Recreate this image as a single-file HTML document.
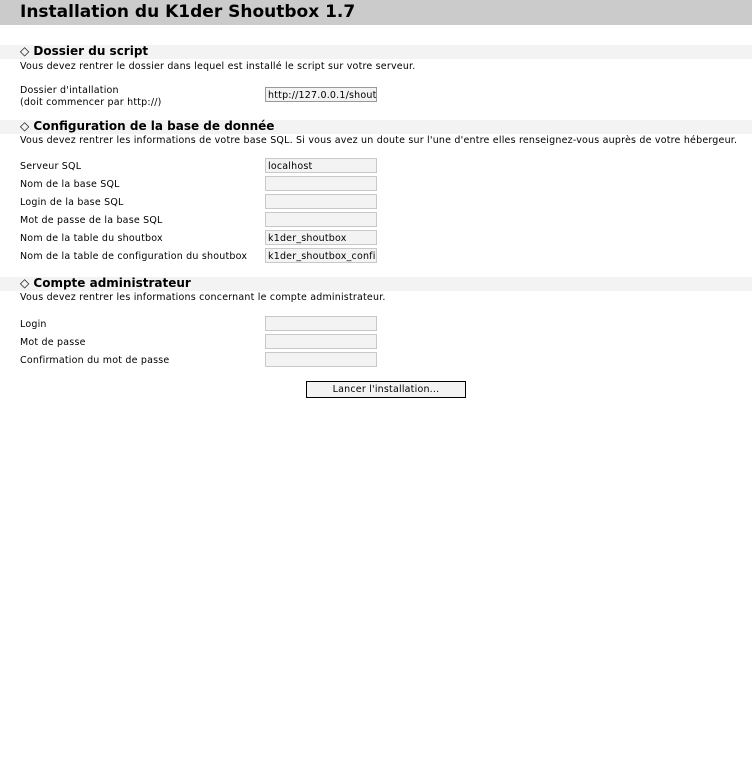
<!DOCTYPE html>
<html><head><meta charset="utf-8"><style>
body{margin:0;width:752px;height:761px;background:#fff;font-family:"DejaVu Sans","Liberation Sans",sans-serif;font-size:9.5px;letter-spacing:0.2px;color:#000;position:relative;overflow:hidden}
.a{position:absolute;white-space:nowrap}
.top{position:absolute;left:0;top:0;width:752px;height:25px;background:#cbcbcb}
.top span{position:absolute;left:20px;top:2px;font-size:17px;letter-spacing:0;font-weight:bold;font-family:"DejaVu Sans",sans-serif}
.sec{position:absolute;left:0;width:752px;height:14px;background:#f3f3f3}
.sec span{position:absolute;left:20px;top:-1px;font-size:12px;letter-spacing:0;font-weight:bold}
.in{position:absolute;left:265px;height:15px;border:1px solid #c8c8c8;background:#f3f3f3;font-size:9.5px;line-height:15px;padding-left:2px;box-sizing:border-box;width:112px;overflow:hidden;white-space:nowrap}
.btn{position:absolute;left:306px;top:381px;width:160px;height:17px;border:1px solid #000;background:#f3f3f3;box-sizing:border-box;text-align:center;line-height:15px}
</style></head><body>
<div class="top"><span>Installation du K1der Shoutbox 1.7</span></div>
<div class="sec" style="top:45px"><span>◇ Dossier du script</span></div>
<div class="a" style="left:20px;top:61px">Vous devez rentrer le dossier dans lequel est installé le script sur votre serveur.</div>
<div class="a" style="left:20px;top:85px">Dossier d'intallation</div>
<div class="a" style="left:20px;top:97px">(doit commencer par http://)</div>
<div class="in" style="top:87px;border-color:#999">http://127.0.0.1/shoutbox</div>
<div class="sec" style="top:120px"><span>◇ Configuration de la base de donnée</span></div>
<div class="a" style="left:20px;top:135px">Vous devez rentrer les informations de votre base SQL. Si vous avez un doute sur l'une d'entre elles renseignez-vous auprès de votre hébergeur.</div>
<div class="a" style="left:20px;top:161px">Serveur SQL</div><div class="in" style="top:158px">localhost</div>
<div class="a" style="left:20px;top:179px">Nom de la base SQL</div><div class="in" style="top:176px"></div>
<div class="a" style="left:20px;top:197px">Login de la base SQL</div><div class="in" style="top:194px"></div>
<div class="a" style="left:20px;top:215px">Mot de passe de la base SQL</div><div class="in" style="top:212px"></div>
<div class="a" style="left:20px;top:233px">Nom de la table du shoutbox</div><div class="in" style="top:230px">k1der_shoutbox</div>
<div class="a" style="left:20px;top:251px">Nom de la table de configuration du shoutbox</div><div class="in" style="top:248px">k1der_shoutbox_config</div>
<div class="sec" style="top:277px"><span>◇ Compte administrateur</span></div>
<div class="a" style="left:20px;top:292px">Vous devez rentrer les informations concernant le compte administrateur.</div>
<div class="a" style="left:20px;top:319px">Login</div><div class="in" style="top:316px"></div>
<div class="a" style="left:20px;top:337px">Mot de passe</div><div class="in" style="top:334px"></div>
<div class="a" style="left:20px;top:355px">Confirmation du mot de passe</div><div class="in" style="top:352px"></div>
<div class="btn">Lancer l'installation...</div>
</body></html>
